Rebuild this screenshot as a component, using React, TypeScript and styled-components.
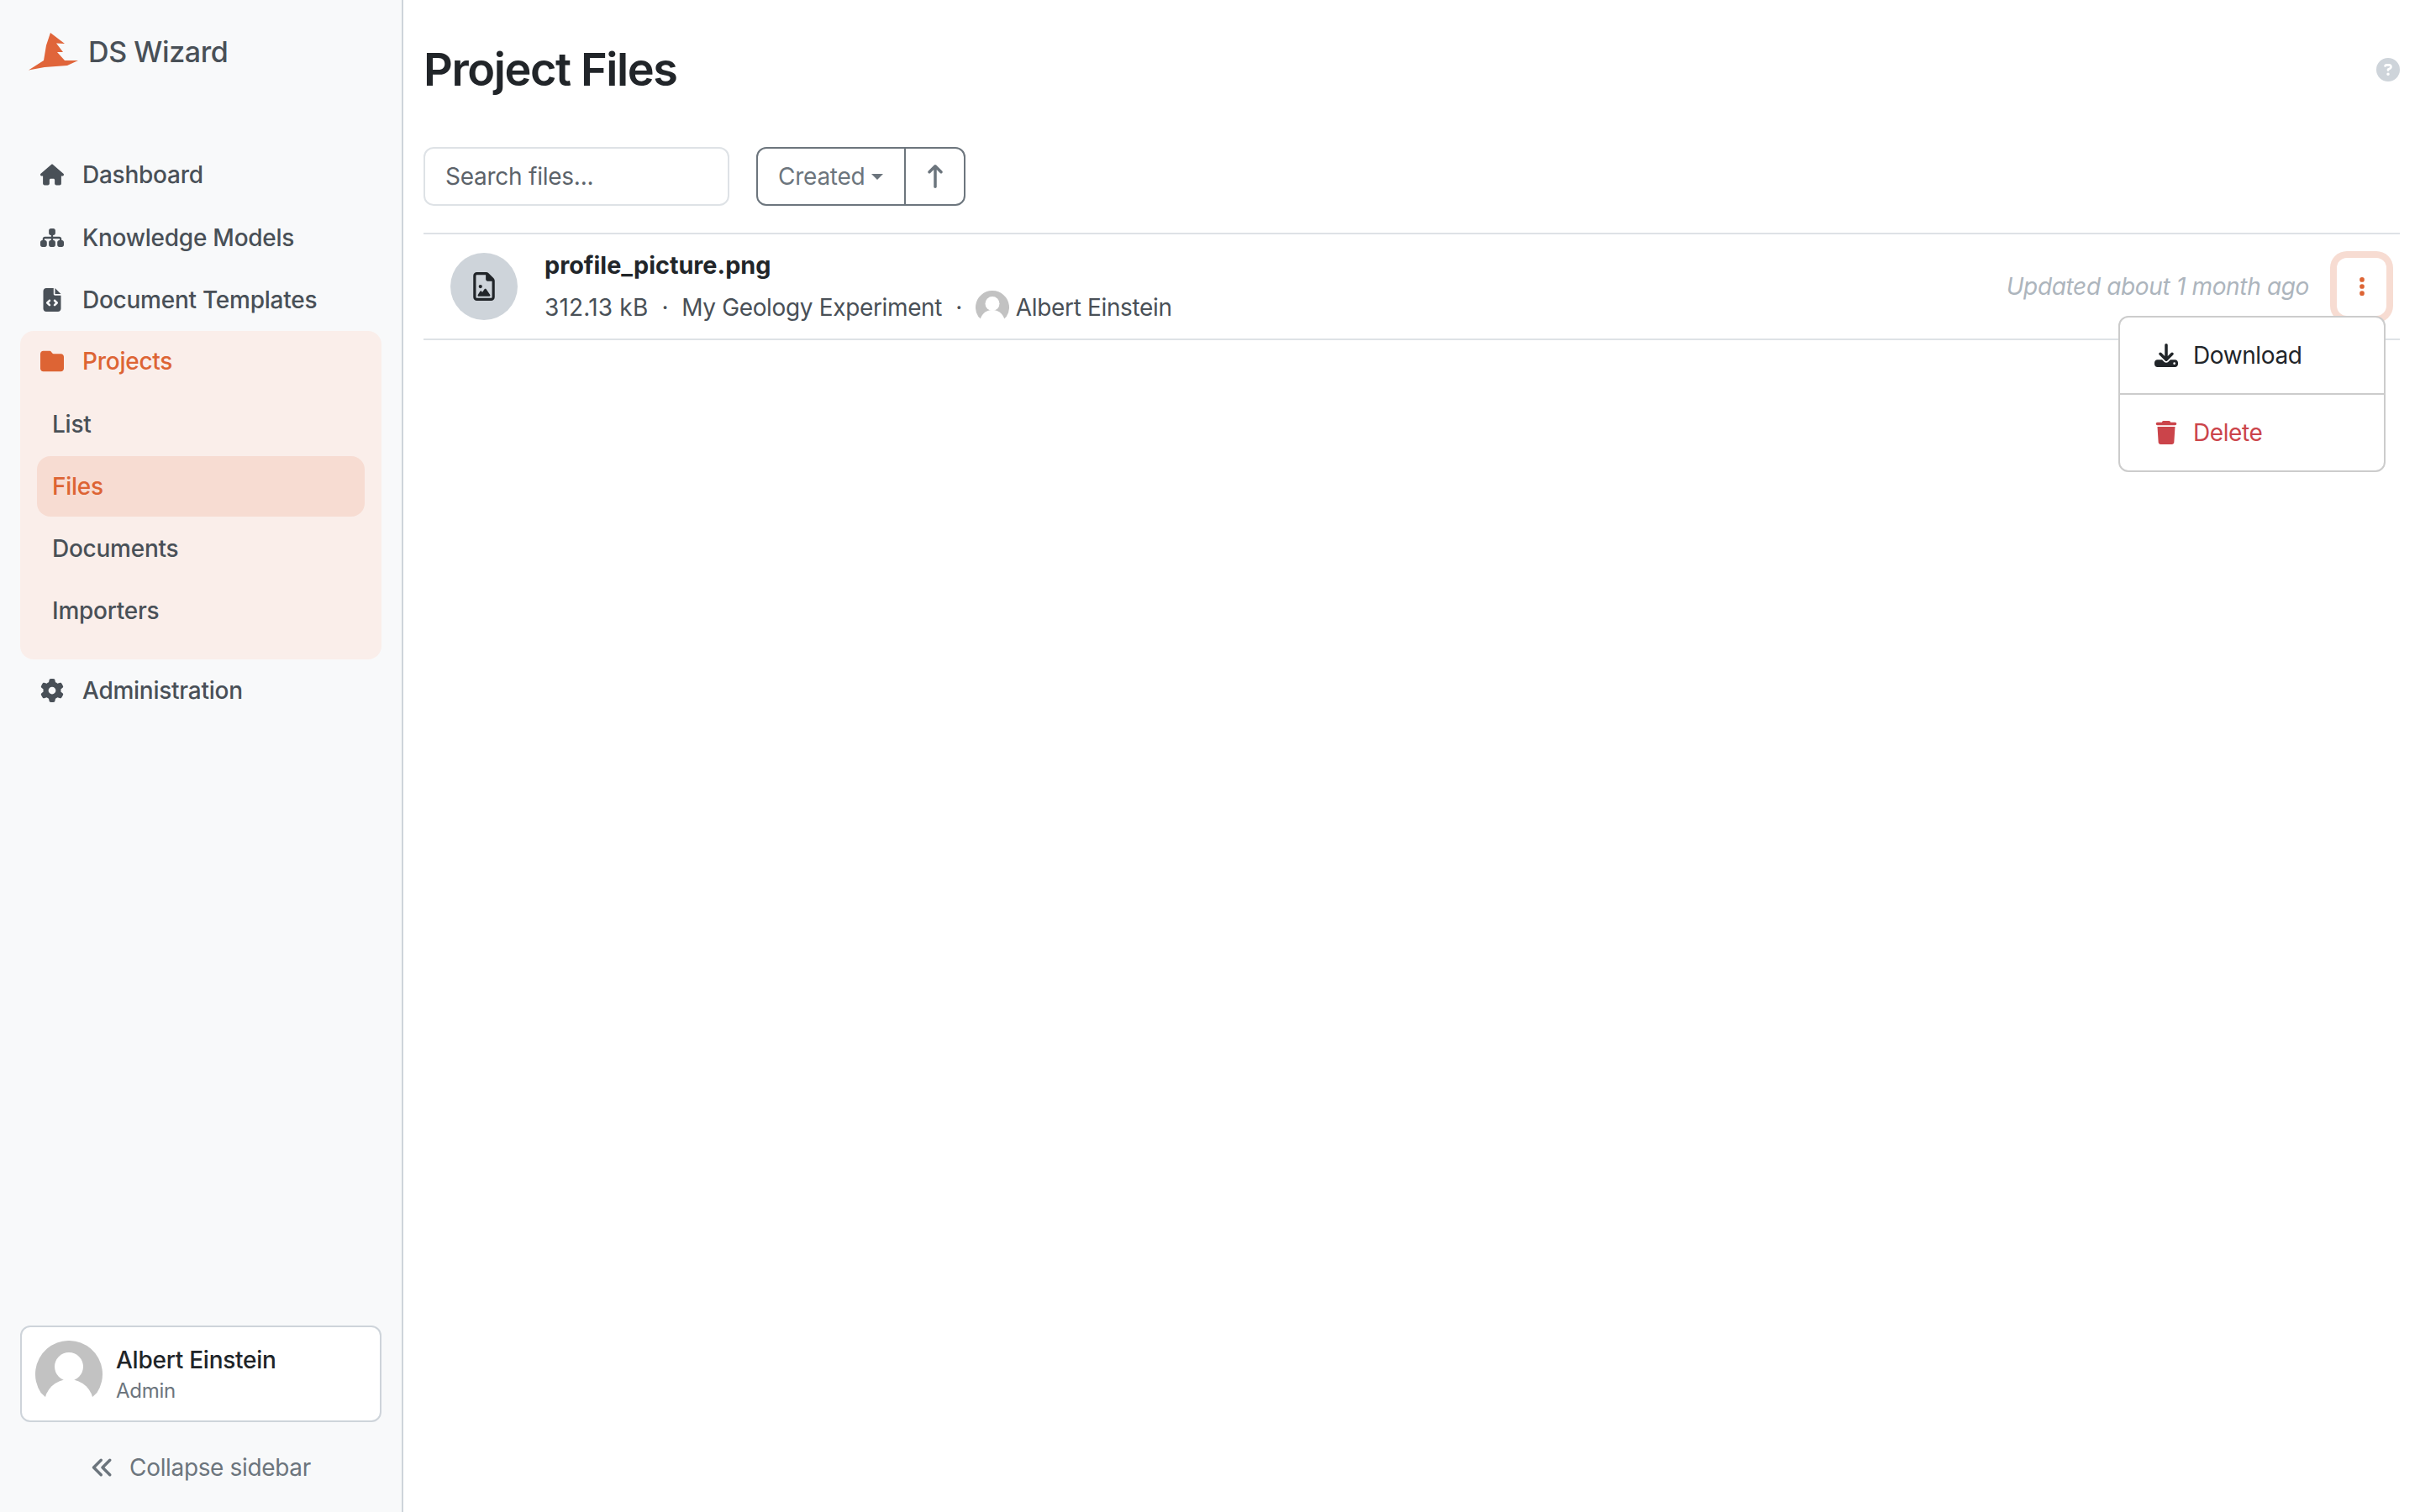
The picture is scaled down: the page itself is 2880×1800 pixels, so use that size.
import { createGlobalStyle, styled } from "styled-components"
import {
    FaAnglesLeft,
    FaArrowUpLong,
    FaCircleQuestion,
    FaDownload,
    FaEllipsisVertical,
    FaFileCode,
    FaFolder,
    FaGear,
    FaHouse,
    FaRegFileImage,
    FaSitemap,
    FaTrash,
} from "react-icons/fa6"

const GlobalStyle = createGlobalStyle`
    html, body {
        margin:0;
        padding:0;
        background:#fff;
        font-family:Inter, "Liberation Sans", sans-serif;
        letter-spacing:-0.25px;
    }
    * { box-sizing:border-box; }
`

const Page = styled.div`
    display:flex;
    width:100%;
    height:100vh;
    overflow:hidden;
`
const Sidebar = styled.aside`
    display:flex;
    flex-direction:column;
    flex:0 0 480px;
    background:#f8f9fa;
    border-right:2px solid #ced4da;
`
const Brand = styled.div`
    display:flex;
    align-items:center;
    gap:11px;
    height:171px;
    padding:0 0 48px 34px;
    font-size:34px;
    font-weight:500;
    letter-spacing:-0.4px;
    color:#495057;
`
const Nav = styled.nav`
    display:flex;
    flex-direction:column;
`
const NavRow = styled.div<{ $active?: boolean }>`
    display:flex;
    align-items:center;
    height:74.4px;
    padding-left:45px;
    font-size:28px;
    font-weight:500;
    color:${(p) => (p.$active ? "#dd6434" : "#495057")};
`
const NavIcon = styled.span`
    display:flex;
    justify-content:center;
    width:34px;
    margin-right:19px;
    font-size:28px;
`
const Group = styled.div`
    margin:0 24px;
    padding-bottom:22.5px;
    background:#faeeea;
    border-radius:16px;
`
const GroupHead = styled(NavRow)`
    height:72.6px;
    padding-left:21px;
`
const SubRow = styled.div<{ $active?: boolean }>`
    display:flex;
    align-items:center;
    height:72px;
    margin:2px 20px 0;
    padding-left:18px;
    border-radius:16px;
    font-size:28px;
    font-weight:500;
    color:${(p) => (p.$active ? "#dd6434" : "#495057")};
    background:${(p) => (p.$active ? "#f7dcd2" : "transparent")};
`
const Footer = styled.div`
    display:flex;
    flex-direction:column;
    margin-top:auto;
`
const ProfileCard = styled.div`
    display:flex;
    align-items:center;
    gap:16px;
    height:115px;
    margin:0 24px;
    padding-left:16px;
    background:#fff;
    border:2px solid #ced4da;
    border-radius:12px;
`
const ProfileText = styled.div`
    padding-top:2px;
`
const ProfileName = styled.div`
    font-size:28px;
    font-weight:500;
    line-height:38px;
    color:#212529;
`
const ProfileRole = styled.div`
    font-size:24px;
    line-height:36px;
    color:#6c757d;
`
const Collapse = styled.div`
    display:flex;
    align-items:center;
    justify-content:center;
    gap:18px;
    height:107px;
    font-size:28px;
    letter-spacing:-0.35px;
    color:#6c757d;
    svg { font-size:28px; }
`
const Main = styled.main`
    flex:1;
    min-width:0;
    padding:0 24px;
`
const TitleBar = styled.div`
    display:flex;
    align-items:center;
    justify-content:space-between;
    height:175px;
    padding-bottom:10px;
`
const Title = styled.h1`
    margin:0;
    font-size:54px;
    font-weight:560;
    letter-spacing:-1.4px;
    color:#212529;
`
const Help = styled.span`
    display:flex;
    font-size:28px;
    color:#ced4da;
`
const Toolbar = styled.div`
    display:flex;
    gap:32px;
    height:70px;
    margin-bottom:32px;
`
const SearchBox = styled.div`
    display:flex;
    align-items:center;
    width:364px;
    padding-left:24px;
    border:2px solid #dee2e6;
    border-radius:12px;
    font-size:28px;
    color:#5c636a;
`
const SortGroup = styled.div`
    display:flex;
    width:249px;
    border:2px solid #6c757d;
    border-radius:12px;
    font-size:28px;
    color:#6c757d;
`
const SortField = styled.div`
    display:flex;
    align-items:center;
    flex:1;
    padding-left:24px;
    border-right:2px solid #6c757d;
`
const Caret = styled.span`
    width:0;
    height:0;
    margin-left:8px;
    border-top:7px solid #6c757d;
    border-left:7px solid transparent;
    border-right:7px solid transparent;
`
const SortDirection = styled.div`
    display:flex;
    align-items:center;
    justify-content:center;
    width:69px;
    font-size:28px;
`
const FileRow = styled.div`
    position:relative;
    display:flex;
    align-items:center;
    height:128px;
    padding:0 16px 0 32px;
    border-top:2px solid #dee2e6;
    border-bottom:2px solid #dee2e6;
`
const FileIcon = styled.div`
    display:flex;
    align-items:center;
    justify-content:center;
    flex:0 0 80px;
    height:80px;
    margin-right:32px;
    border-radius:50%;
    background:#ced4da;
    font-size:34px;
    color:#212529;
`
const FileInfo = styled.div`
    flex:1;
`
const FileName = styled.div`
    font-size:28.8px;
    font-weight:700;
    line-height:50px;
    letter-spacing:0;
    color:#212529;
`
const FileMeta = styled.div`
    display:flex;
    align-items:center;
    height:50px;
    font-size:28px;
    letter-spacing:-0.35px;
    color:#495057;
`
const MetaSize = styled.span`
    letter-spacing:0.2px;
`
const MetaDot = styled.span`
    margin:0 16px;
`
const MetaUser = styled.span`
    display:flex;
    align-items:center;
    gap:8px;
`
const Updated = styled.span`
    margin-right:33px;
    font-size:28px;
    font-style:italic;
    letter-spacing:-0.35px;
    color:#adb5bd;
`
const MenuButton = styled.div`
    display:flex;
    align-items:center;
    justify-content:center;
    width:59px;
    height:69px;
    border-radius:12px;
    box-shadow:0 0 0 8px #f7dcd2;
    font-size:26px;
    color:#dd6434;
`
const Dropdown = styled.div`
    position:absolute;
    top:97px;
    right:17px;
    z-index:2;
    width:318px;
    background:#fff;
    border:2px solid #ccc;
    border-radius:12px;
`
const DropdownItem = styled.div<{ $danger?: boolean }>`
    display:flex;
    align-items:center;
    gap:18px;
    height:90px;
    padding-left:41px;
    font-size:28px;
    letter-spacing:-0.4px;
    color:${(p) => (p.$danger ? "#cb444a" : "#212529")};
    svg {
        width:28px;
        font-size:28px;
    }
`
const DropdownDivider = styled.div`
    height:2px;
    background:#ccc;
`

const Logo = () => (
    <svg width="60" height="46" viewBox="0 0 60 46">
        <path
            fill="#e0653a"
            d="M26 0 L43 13 L33 12.5 L41 23 L34 23 L43 33 L59 33 L46 39 L19 41 L0 44.5 L18 33 L21 15 Z"
        />
    </svg>
)

const Avatar = ({ size }: { size: number }) => (
    <svg width={size} height={size} viewBox="0 0 80 80">
        <path fill="#c2c2c2" d="M6.6 62 A40 40 0 1 1 73.4 62 L66 69 L14 69 Z" />
        <ellipse cx="40" cy="31" rx="17" ry="17" fill="#fff" />
        <ellipse cx="40" cy="74" rx="29" ry="28" fill="#fff" />
    </svg>
)

export default function App() {
    return (
        <Page>
            <GlobalStyle />
            <Sidebar>
                <Brand>
                    <Logo />
                    DS Wizard
                </Brand>
                <Nav>
                    <NavRow><NavIcon><FaHouse /></NavIcon>Dashboard</NavRow>
                    <NavRow><NavIcon><FaSitemap /></NavIcon>Knowledge Models</NavRow>
                    <NavRow><NavIcon><FaFileCode /></NavIcon>Document Templates</NavRow>
                    <Group>
                        <GroupHead $active><NavIcon><FaFolder /></NavIcon>Projects</GroupHead>
                        <SubRow>List</SubRow>
                        <SubRow $active>Files</SubRow>
                        <SubRow>Documents</SubRow>
                        <SubRow>Importers</SubRow>
                    </Group>
                    <NavRow><NavIcon><FaGear /></NavIcon>Administration</NavRow>
                </Nav>
                <Footer>
                    <ProfileCard>
                        <Avatar size={80} />
                        <ProfileText>
                            <ProfileName>Albert Einstein</ProfileName>
                            <ProfileRole>Admin</ProfileRole>
                        </ProfileText>
                    </ProfileCard>
                    <Collapse><FaAnglesLeft />Collapse sidebar</Collapse>
                </Footer>
            </Sidebar>
            <Main>
                <TitleBar>
                    <Title>Project Files</Title>
                    <Help><FaCircleQuestion /></Help>
                </TitleBar>
                <Toolbar>
                    <SearchBox>Search files...</SearchBox>
                    <SortGroup>
                        <SortField>Created<Caret /></SortField>
                        <SortDirection><FaArrowUpLong /></SortDirection>
                    </SortGroup>
                </Toolbar>
                <FileRow>
                    <FileIcon><FaRegFileImage /></FileIcon>
                    <FileInfo>
                        <FileName>profile_picture.png</FileName>
                        <FileMeta>
                            <MetaSize>312.13 kB</MetaSize>
                            <MetaDot>·</MetaDot>
                            My Geology Experiment
                            <MetaDot>·</MetaDot>
                            <MetaUser><Avatar size={40} />Albert Einstein</MetaUser>
                        </FileMeta>
                    </FileInfo>
                    <Updated>Updated about 1 month ago</Updated>
                    <MenuButton><FaEllipsisVertical /></MenuButton>
                    <Dropdown>
                        <DropdownItem><FaDownload />Download</DropdownItem>
                        <DropdownDivider />
                        <DropdownItem $danger><FaTrash />Delete</DropdownItem>
                    </Dropdown>
                </FileRow>
            </Main>
        </Page>
    )
}
